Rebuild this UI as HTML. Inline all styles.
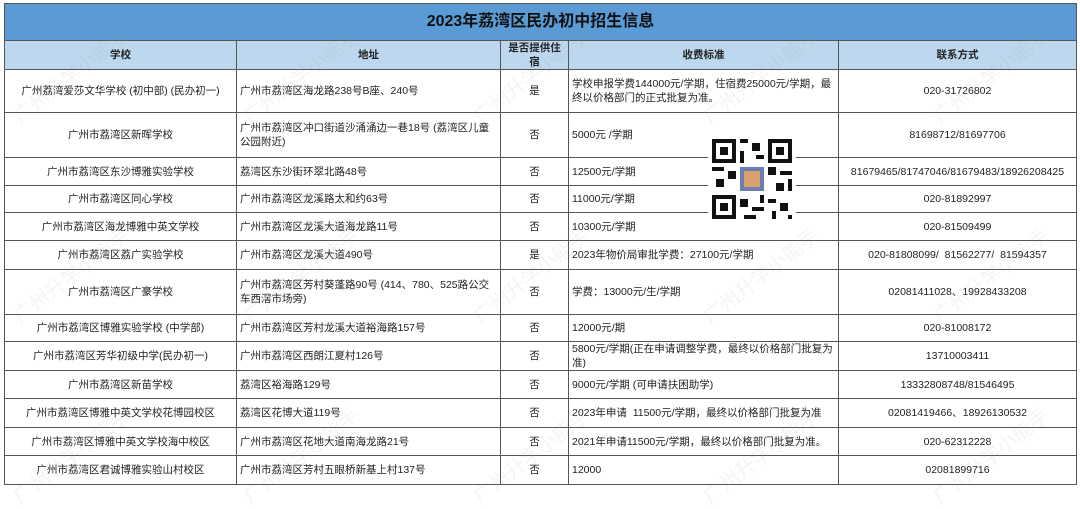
<!DOCTYPE html>
<html><head><meta charset="utf-8"><style>
body{margin:0;background:#fff;width:1080px;height:489px;overflow:hidden;position:relative;font-family:"Liberation Sans","Noto Sans CJK SC",sans-serif;color:#222}
table{position:absolute;left:4px;top:3px;border-collapse:collapse;table-layout:fixed;width:1072px}
td{border:1px solid #555;font-size:10.5px;padding:0 3px;line-height:14px;text-align:center;overflow:hidden;white-space:nowrap}
td.l{text-align:left;white-space:normal}
.t{background:#5b9bd5;font-size:16px;font-weight:bold;height:36px;color:#111}
.h td{background:#bdd7ee;font-weight:bold;font-size:10.5px}
.wm{position:absolute;color:rgba(150,150,150,0.1);font-size:20px;transform:rotate(-38deg);white-space:nowrap;pointer-events:none}
</style></head><body>
<table>
<colgroup><col style="width:232px"><col style="width:264px"><col style="width:68px"><col style="width:270px"><col style="width:238px"></colgroup>
<tr><td colspan="5" class="t">2023年荔湾区民办初中招生信息</td></tr>
<tr class="h" style="height:29px"><td>学校</td><td>地址</td><td style="white-space:normal">是否提供住宿</td><td>收费标准</td><td>联系方式</td></tr>
<tr style="height:43px"><td>广州荔湾爱莎文华学校 (初中部) (民办初一)</td><td class="l">广州市荔湾区海龙路238号B座、240号</td><td>是</td><td class="l">学校申报学费144000元/学期，住宿费25000元/学期，最终以价格部门的正式批复为准。</td><td>020-31726802</td></tr>
<tr style="height:45px"><td>广州市荔湾区新晖学校</td><td class="l">广州市荔湾区冲口街道沙涌涌边一巷18号 (荔湾区儿童公园附近)</td><td>否</td><td class="l">5000元 /学期</td><td>81698712/81697706</td></tr>
<tr style="height:28px"><td>广州市荔湾区东沙博雅实验学校</td><td class="l">荔湾区东沙街环翠北路48号</td><td>否</td><td class="l">12500元/学期</td><td>81679465/81747046/81679483/18926208425</td></tr>
<tr style="height:27px"><td>广州市荔湾区同心学校</td><td class="l">广州市荔湾区龙溪路太和约63号</td><td>否</td><td class="l">11000元/学期</td><td>020-81892997</td></tr>
<tr style="height:28px"><td>广州市荔湾区海龙博雅中英文学校</td><td class="l">广州市荔湾区龙溪大道海龙路11号</td><td>否</td><td class="l">10300元/学期</td><td>020-81509499</td></tr>
<tr style="height:29px"><td>广州市荔湾区荔广实验学校</td><td class="l">广州市荔湾区龙溪大道490号</td><td>是</td><td class="l">2023年物价局审批学费：27100元/学期</td><td>020-81808099/ &nbsp;81562277/ &nbsp;81594357</td></tr>
<tr style="height:45px"><td>广州市荔湾区广豪学校</td><td class="l">广州市荔湾区芳村葵蓬路90号 (414、780、525路公交车西滘市场旁)</td><td>否</td><td class="l">学费：13000元/生/学期</td><td>02081411028、19928433208</td></tr>
<tr style="height:27px"><td>广州市荔湾区博雅实验学校 (中学部)</td><td class="l">广州市荔湾区芳村龙溪大道裕海路157号</td><td>否</td><td class="l">12000元/期</td><td>020-81008172</td></tr>
<tr style="height:28px"><td>广州市荔湾区芳华初级中学(民办初一)</td><td class="l">广州市荔湾区西朗江夏村126号</td><td>否</td><td class="l">5800元/学期(正在申请调整学费，最终以价格部门批复为准)</td><td>13710003411</td></tr>
<tr style="height:28px"><td>广州市荔湾区新苗学校</td><td class="l">荔湾区裕海路129号</td><td>否</td><td class="l">9000元/学期 (可申请扶困助学)</td><td>13332808748/81546495</td></tr>
<tr style="height:29px"><td>广州市荔湾区博雅中英文学校花博园校区</td><td class="l">荔湾区花博大道119号</td><td>否</td><td class="l">2023年申请 &nbsp;11500元/学期，最终以价格部门批复为准</td><td>02081419466、18926130532</td></tr>
<tr style="height:28px"><td>广州市荔湾区博雅中英文学校海中校区</td><td class="l">广州市荔湾区花地大道南海龙路21号</td><td>否</td><td class="l">2021年申请11500元/学期，最终以价格部门批复为准。</td><td>020-62312228</td></tr>
<tr style="height:29px"><td>广州市荔湾区君诚博雅实验山村校区</td><td class="l">广州市荔湾区芳村五眼桥新基上村137号</td><td>否</td><td class="l">12000</td><td>02081899716</td></tr>
</table>
<svg style="position:absolute;left:708px;top:135px" width="88" height="88" viewBox="0 0 22 22">
<rect width="22" height="22" fill="#fff"/>
<g fill="#111">
<rect x="1" y="1" width="6" height="6"/><rect x="15" y="1" width="6" height="6"/><rect x="1" y="15" width="6" height="6"/>
</g>
<g fill="#fff"><rect x="2" y="2" width="4" height="4"/><rect x="16" y="2" width="4" height="4"/><rect x="2" y="16" width="4" height="4"/></g>
<g fill="#111"><rect x="3" y="3" width="2" height="2"/><rect x="17" y="3" width="2" height="2"/><rect x="3" y="17" width="2" height="2"/>
<rect x="8" y="1" width="2" height="1"/><rect x="11" y="2" width="2" height="2"/><rect x="8" y="4" width="1" height="3"/><rect x="12" y="5" width="2" height="1"/>
<rect x="1" y="8" width="3" height="1"/><rect x="5" y="9" width="2" height="2"/><rect x="2" y="11" width="2" height="2"/><rect x="15" y="8" width="2" height="2"/><rect x="18" y="9" width="3" height="1"/><rect x="17" y="12" width="2" height="2"/><rect x="20" y="11" width="1" height="3"/>
<rect x="8" y="16" width="2" height="2"/><rect x="11" y="18" width="3" height="1"/><rect x="15" y="16" width="2" height="1"/><rect x="18" y="17" width="2" height="2"/><rect x="16" y="19" width="1" height="2"/><rect x="9" y="20" width="3" height="1"/><rect x="13" y="15" width="1" height="2"/><rect x="20" y="20" width="1" height="1"/></g>
<rect x="8" y="8" width="6" height="6" fill="#6a7fb0"/><rect x="9" y="9" width="4" height="4" fill="#d9a070"/>
</svg>
<div class="wm" style="left:0px;top:60px">广州升学小能手</div>
<div class="wm" style="left:230px;top:60px">广州升学小能手</div>
<div class="wm" style="left:460px;top:60px">广州升学小能手</div>
<div class="wm" style="left:690px;top:60px">广州升学小能手</div>
<div class="wm" style="left:920px;top:60px">广州升学小能手</div>
<div class="wm" style="left:0px;top:260px">广州升学小能手</div>
<div class="wm" style="left:230px;top:260px">广州升学小能手</div>
<div class="wm" style="left:460px;top:260px">广州升学小能手</div>
<div class="wm" style="left:690px;top:260px">广州升学小能手</div>
<div class="wm" style="left:920px;top:260px">广州升学小能手</div>
<div class="wm" style="left:0px;top:440px">广州升学小能手</div>
<div class="wm" style="left:230px;top:440px">广州升学小能手</div>
<div class="wm" style="left:460px;top:440px">广州升学小能手</div>
<div class="wm" style="left:690px;top:440px">广州升学小能手</div>
<div class="wm" style="left:920px;top:440px">广州升学小能手</div>
</body></html>
